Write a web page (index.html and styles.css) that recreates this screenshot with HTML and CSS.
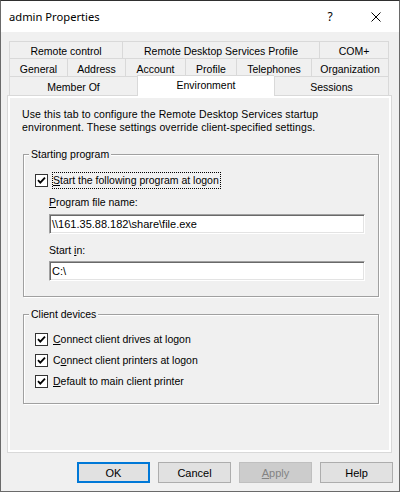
FILE: index.html
```html
<!DOCTYPE html>
<html lang="en">
<head>
<meta charset="utf-8">
<title>admin Properties</title>
<link rel="stylesheet" href="styles.css">
</head>
<body>
<div class="window">
  <header class="titlebar">
    <span class="title">admin Properties</span>
    <span class="capbtn help">?</span>
    <span class="capbtn close">
      <svg width="10" height="10" viewBox="0 0 10 10"><path d="M0.5 0.5 L9.5 9.5 M9.5 0.5 L0.5 9.5" stroke="#000" stroke-width="1" fill="none"/></svg>
    </span>
  </header>

  <div class="tabs">
    <div class="tabrow row1">
      <div class="tab">Remote control</div>
      <div class="tab">Remote Desktop Services Profile</div>
      <div class="tab">COM+</div>
    </div>
    <div class="tabrow row2">
      <div class="tab">General</div>
      <div class="tab">Address</div>
      <div class="tab">Account</div>
      <div class="tab">Profile</div>
      <div class="tab">Telephones</div>
      <div class="tab">Organization</div>
    </div>
    <div class="tabrow row3">
      <div class="tab">Member Of</div>
      <div class="tab selected">Environment</div>
      <div class="tab">Sessions</div>
    </div>
  </div>

  <div class="panel">
    <p class="intro">Use this tab to configure the Remote Desktop Services startup<br>environment. These settings override client-specified settings.</p>

    <div class="group g1">
      <span class="legend">Starting program</span>
      <div class="checkrow first">
        <span class="cb"><svg width="11" height="11" viewBox="0 0 11 11"><path d="M2 5.2 L4.3 7.6 L9 2.6" stroke="#000" stroke-width="1.8" fill="none"/></svg></span>
        <span class="cbtext focus"><u>S</u>tart the following program at logon</span>
      </div>
      <div class="field">
        <div class="lbl lbl1"><u>P</u>rogram file name:</div>
        <div class="input in1">\\161.35.88.182\share\file.exe</div>
        <div class="lbl lbl2">Start <u>i</u>n:</div>
        <div class="input in2">C:\</div>
      </div>
    </div>

    <div class="group g2">
      <span class="legend">Client devices</span>
      <div class="checkrow">
        <span class="cb"><svg width="11" height="11" viewBox="0 0 11 11"><path d="M2 5.2 L4.3 7.6 L9 2.6" stroke="#000" stroke-width="1.8" fill="none"/></svg></span>
        <span class="cbtext"><u>C</u>onnect client drives at logon</span>
      </div>
      <div class="checkrow">
        <span class="cb"><svg width="11" height="11" viewBox="0 0 11 11"><path d="M2 5.2 L4.3 7.6 L9 2.6" stroke="#000" stroke-width="1.8" fill="none"/></svg></span>
        <span class="cbtext">C<u>o</u>nnect client printers at logon</span>
      </div>
      <div class="checkrow">
        <span class="cb"><svg width="11" height="11" viewBox="0 0 11 11"><path d="M2 5.2 L4.3 7.6 L9 2.6" stroke="#000" stroke-width="1.8" fill="none"/></svg></span>
        <span class="cbtext"><u>D</u>efault to main client printer</span>
      </div>
    </div>
  </div>

  <div class="buttons">
    <button class="btn default">OK</button>
    <button class="btn">Cancel</button>
    <button class="btn disabled"><u>A</u>pply</button>
    <button class="btn">Help</button>
  </div>
</div>
</body>
</html>
```

FILE: styles.css
```css
* {
  box-sizing: border-box;
}

body {
  margin: 0;
  font-family: "Liberation Sans", Arial, sans-serif;
  font-size: 10.5px;
  color: #000;
}

.window {
  width: 400px;
  height: 492px;
  border: 1px solid #6a6a6a;
  border-top-color: #2f2f2f;
  background: #f0f0f0;
  display: flex;
  flex-direction: column;
  overflow: hidden;
}

/* Title bar */
.titlebar {
  flex: 0 0 31px;
  height: 31px;
  background: #fff;
  display: flex;
  align-items: center;
  padding-left: 8px;
}

.title {
  flex: 1;
  font-family: "Noto Sans", "Open Sans", sans-serif;
  font-size: 11.2px;
  padding-bottom: 1px;
}

.capbtn {
  width: 46px;
  height: 31px;
  display: flex;
  align-items: center;
  justify-content: center;
}

.help {
  font-family: "Noto Sans", sans-serif;
  font-size: 12px;
  padding-bottom: 1px;
}

/* Tabs */
.tabs {
  margin: 9px 0 0 8px;
  width: 380px;
}

.tabrow {
  display: grid;
}

.row1 {
  grid-template-columns: 113px 197px 70px;
  height: 17px;
}

.row2 {
  grid-template-columns: 58px 58px 60px 51px 75px 78px;
  height: 18px;
}

.row3 {
  grid-template-columns: 128px 137px 115px;
  height: 19px;
}

.tab {
  border-top: 1px solid #d9d9d9;
  border-left: 1px solid #d9d9d9;
  background: #f0f0f0;
  display: flex;
  align-items: center;
  justify-content: center;
  padding-top: 2px;
  white-space: nowrap;
}

.tab:last-child {
  border-right: 1px solid #d9d9d9;
}

.tab.selected {
  background: #fff;
  margin: -1px 0 -1px 0;
  padding: 0 0 2px 0;
  position: relative;
  z-index: 1;
}

/* Panel */
.panel {
  margin-left: 6px;
  width: 385px;
  height: 358px;
  border: 1px solid #d9d9d9;
  box-shadow: inset 0 0 0 2px #fff;
  padding: 12px 0 0 14px;
}

.intro {
  margin: 0;
  line-height: 13px;
  letter-spacing: 0.1px;
}

.group {
  position: relative;
  margin-left: 1px;
  width: 356px;
  border: 1px solid #a0a0a0;
  box-shadow: 1px 1px 0 #fff, inset 1px 1px 0 #fff;
  padding-left: 11px;
}

.legend {
  position: absolute;
  top: -7px;
  left: 5px;
  padding: 0 2px;
  background: #f0f0f0;
  line-height: 13px;
}

.g1 {
  margin-top: 20px;
  height: 143px;
  padding-top: 17px;
}

.g2 {
  margin-top: 17px;
  height: 90px;
  padding-top: 14px;
}

.checkrow {
  display: flex;
  align-items: center;
  height: 21px;
}

.checkrow.first {
  height: 17px;
}

.cb {
  flex: 0 0 13px;
  width: 13px;
  height: 13px;
  border: 1px solid #333;
  background: #fff;
  margin-right: 4px;
  display: flex;
}

.cbtext {
  border: 1px solid transparent;
  padding-right: 1px;
  line-height: 15px;
  white-space: nowrap;
}

.cbtext.focus {
  border: 1px dotted #000;
}

.field {
  margin-left: 14px;
}

.lbl {
  line-height: 13px;
}

.lbl1 {
  margin-top: 7px;
}

.lbl2 {
  margin-top: 10px;
}

.input {
  width: 316px;
  height: 20px;
  background: #fff;
  border: 1px solid;
  border-color: #a0a0a0 #fff #fff #a0a0a0;
  box-shadow: inset 1px 1px 0 #696969, inset -1px -1px 0 #e3e3e3;
  padding-left: 2px;
  font-size: 11px;
  line-height: 18px;
  white-space: nowrap;
}

.in1 {
  margin-top: 5px;
}

.in2 {
  margin-top: 4px;
}

/* Buttons */
.buttons {
  margin-top: 9px;
  display: flex;
  justify-content: flex-end;
  gap: 8px;
  padding-right: 6px;
}

.btn {
  width: 73px;
  height: 21px;
  border: 1px solid #adadad;
  background: #e1e1e1;
  font-family: "Liberation Sans", Arial, sans-serif;
  font-size: 11px;
  color: #000;
  padding: 0;
}

.btn.default {
  border: 2px solid #0078d7;
}

.btn.disabled {
  background: #cccccc;
  border-color: #bfbfbf;
  color: #838383;
}
```
